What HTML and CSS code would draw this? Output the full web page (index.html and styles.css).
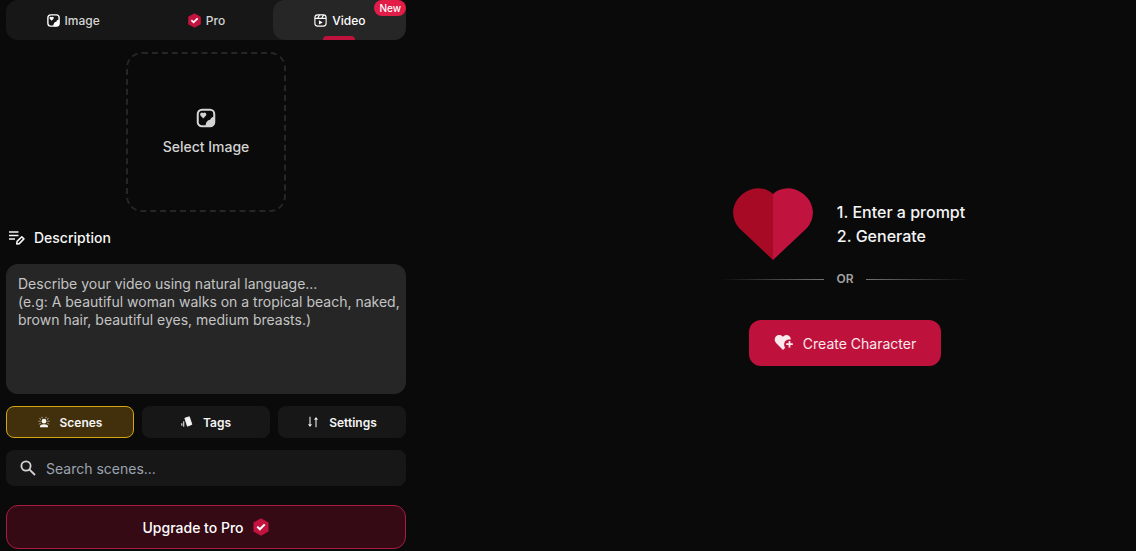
FILE: index.html
```html
<!DOCTYPE html>
<html lang="en">
<head>
<meta charset="utf-8">
<meta name="viewport" content="width=device-width, initial-scale=1">
<title>Video generator</title>
<link rel="stylesheet" href="styles.css">
</head>
<body>
<svg class="sprite" aria-hidden="true">
  <symbol id="picture" viewBox="0 0 24 24">
    <rect x="3" y="3" width="18" height="18" rx="4.5" fill="none" stroke="currentColor" stroke-width="2.2"/>
    <path d="M21 10.500c-2.500 0-4 1.500-4.500 3.500-2.500.2-4.800 2.500-5 7H17a4 4 0 0 0 4-4z" fill="currentColor"/>
    <path d="M9 12.500 6 9.200a1.800 1.800 0 0 1 3-2.300 1.800 1.800 0 0 1 3 2.300z" fill="currentColor"/>
  </symbol>
  <symbol id="verified" viewBox="0 0 24 24">
    <path d="M12 1.500 21 6.500v11l-9 5-9-5v-11z" fill="#c3143f" stroke="#c3143f" stroke-width="2" stroke-linejoin="round"/>
    <path d="m7 11.500 3.500 3.500 6.500-6.500" fill="none" stroke="#fff" stroke-width="2.800"/>
  </symbol>
</svg>
<div class="layout">
  <aside class="panel">
    <nav class="tabs">
      <button class="tab" type="button"><svg class="icon icon-light"><use href="#picture"/></svg>Image</button>
      <button class="tab" type="button"><svg class="icon"><use href="#verified"/></svg>Pro</button>
      <button class="tab tab-active" type="button">
        <svg class="icon" viewBox="0 0 24 24" fill="none" stroke="currentColor" stroke-width="1.800"><rect x="3" y="3" width="18" height="18" rx="4.500"/><path d="M3 8.500h18M7.500 8.500l3-5.500M14 8.500l3-5.500"/><path d="m9.500 11.500 6 3.500-6 3.500z" fill="currentColor" stroke="none"/></svg>Video
        <span class="badge">New</span>
      </button>
    </nav>

    <button class="upload" type="button"><svg class="icon-large"><use href="#picture"/></svg>Select Image</button>

    <label class="heading" for="description">
      <svg class="icon-heading" viewBox="0 0 18 16" fill="none" stroke="currentColor"><path d="M1 2h9.500M1 5.500h9.500M1 9h6" stroke-width="1.700"/><path d="m8.700 14 .4-2.600 4.700-4.600 2.100 2.100-4.600 4.700z" stroke-width="1.600" stroke-linejoin="round"/></svg>
      Description
    </label>
    <textarea class="description" id="description" placeholder="Describe your video using natural language...&#10;(e.g: A beautiful woman walks on a tropical beach, naked, brown hair, beautiful eyes, medium breasts.)"></textarea>

    <div class="options">
      <button class="option option-active" type="button">
        <svg class="icon-small" viewBox="0 0 14 14" fill="currentColor"><circle cx="7" cy="6" r="2.800"/><path d="M2.300 13v-.8c0-1.800 2-2.600 4.700-2.600s4.700.8 4.700 2.600v.8z"/><path d="M3 8.500 1 9.500M2.800 6.200.6 6M3.300 4 1.500 2.700M5 2.500 4.300.8M9 2.500l.7-1.700M10.700 4l1.800-1.300M11.200 6.200l2.200-.2M11 8.500l2 1" stroke="currentColor" stroke-dasharray="1.200 .5"/></svg>Scenes
      </button>
      <button class="option" type="button">
        <svg class="icon-small" viewBox="0 0 14 14" fill="currentColor"><path d="m4.500 2.500 5.200-1.600 3 8.900-5.200 2.100z" stroke="currentColor" stroke-linejoin="round"/><path d="M3.200 6v6.500M1 8.500v3" stroke="currentColor" stroke-width="1.200"/></svg>Tags
      </button>
      <button class="option" type="button">
        <svg class="icon-small" viewBox="0 0 14 14"><path d="M3.500 1v9M10.500 4v9" stroke="currentColor" stroke-width="1.200"/><path d="M1.200 9.500h4.600L3.500 12.700zM8.200 4.500h4.600L10.500 1.300z" fill="currentColor"/></svg>Settings
      </button>
    </div>

    <label class="search">
      <svg class="icon-search" viewBox="0 0 16 16" fill="none" stroke="currentColor" stroke-width="1.800"><circle cx="6" cy="6" r="4.600"/><path d="m9.300 9.300 5.700 5.700"/></svg>
      <input class="search-input" type="search" aria-label="Search scenes" placeholder="Search scenes...">
    </label>

    <button class="upgrade" type="button">Upgrade to Pro<svg class="icon-pro"><use href="#verified"/></svg></button>
  </aside>

  <main class="stage">
    <div class="intro">
      <svg class="heart" viewBox="0 0 80 72"><path d="M40 6C33-1 20-2 11 5-2 14-3 30 6 40l34 32z" fill="#a60a25"/><path d="M40 6C47-1 60-2 69 5c13 9 14 25 5 35L40 72z" fill="#c0143f"/></svg>
      <div class="steps"><div>1. Enter a prompt</div><div>2. Generate</div></div>
    </div>
    <div class="divider"><span class="line"></span>OR<span class="line line-end"></span></div>
    <button class="create" type="button">
      <svg class="icon-create" viewBox="0 0 20 18" fill="currentColor"><path d="M9 2.700C6.800.2 3.200.4 1.600 2.800.1 5 .6 7.500 2.300 9.200L9 16l2.200-2.200c-2.200-3-1-7.500 3-8.300h2.700C16.500.8 11.700-.5 9 2.700z"/><path d="M15.500 7v6.500M12.200 10.200h6.600" stroke="currentColor" stroke-width="1.800"/></svg>Create Character
    </button>
  </main>
</div>
</body>
</html>
```
FILE: styles.css
```css
* { box-sizing: border-box; }
body {
  margin: 0;
  background: #0a0a0a;
  color: #f5f5f5;
  font-family: "Inter", "Liberation Sans", sans-serif;
  font-size: 14px;
}
button, input, textarea { font: inherit; color: inherit; }
button {
  display: flex;
  align-items: center;
  justify-content: center;
  border: 0;
  padding: 0;
  cursor: pointer;
}
svg { flex: none; }
.sprite { display: none; }
.layout {
  display: grid;
  grid-template-columns: 412px 1fr;
  min-height: 100vh;
}
.panel {
  display: flex;
  flex-direction: column;
  padding: 0 6px 2px;
}
.tabs {
  display: grid;
  grid-template-columns: repeat(3, 1fr);
  border-radius: 12px;
  background: #171717;
}
.tab {
  position: relative;
  gap: 4px;
  height: 40px;
  border-radius: 12px;
  background: none;
  color: #d4d4d4;
  font-size: 12px;
  font-weight: 500;
}
.tab-active {
  background: #262626;
  color: #fff;
}
.tab-active::after {
  content: "";
  position: absolute;
  bottom: 0;
  left: 50%;
  width: 32px;
  height: 4px;
  margin-left: -16px;
  border-radius: 4px 4px 0 0;
  background: #be123c;
}
.badge {
  position: absolute;
  top: 0;
  right: 0;
  padding: 0 5px;
  border-radius: 8px;
  background: #e11d48;
  font-size: 10px;
  line-height: 16px;
}
.icon { width: 15px; height: 15px; }
.icon-light { color: #fff; }
.upload {
  flex-direction: column;
  align-self: center;
  gap: 8px;
  width: 160px;
  height: 160px;
  margin-top: 12px;
  border: 2px dashed #262626;
  border-radius: 16px;
  background: none;
  color: #d4d4d4;
  font-weight: 500;
  line-height: 20px;
}
.icon-large { width: 22px; height: 22px; }
.heading {
  display: flex;
  align-items: center;
  gap: 8px;
  margin: 16px 0;
  padding-left: 2px;
  font-weight: 500;
  line-height: 20px;
}
.icon-heading { width: 18px; height: 16px; }
.description {
  display: block;
  width: 100%;
  height: 130px;
  padding: 11px 4px 12px 12px;
  border: 0;
  border-radius: 12px;
  background: #262626;
  line-height: 18px;
  resize: none;
}
.description::placeholder { color: #c4c4c4; opacity: 1; }
.options {
  display: grid;
  grid-template-columns: repeat(3, 1fr);
  gap: 8px;
  margin-top: 12px;
}
.option {
  gap: 10px;
  height: 32px;
  border-radius: 8px;
  background: #171717;
  font-size: 12px;
  font-weight: 600;
}
.option-active {
  border: 1px solid #d4a514;
  background: #42300c;
}
.icon-small { width: 12px; height: 12px; }
.search {
  display: flex;
  align-items: center;
  gap: 10px;
  height: 36px;
  margin-top: 12px;
  padding: 0 14px;
  border-radius: 8px;
  background: #171717;
}
.icon-search { width: 16px; height: 16px; color: #d4d4d4; }
.search-input {
  flex: 1;
  min-width: 0;
  padding: 0;
  border: 0;
  outline: 0;
  background: none;
}
.search-input::placeholder { color: #9ca3af; opacity: 1; }
.upgrade {
  gap: 8px;
  height: 44px;
  margin-top: 19px;
  border: 1px solid #a91c44;
  border-radius: 12px;
  background: #360a15;
  color: #fff;
  font-weight: 500;
}
.icon-pro { width: 18px; height: 18px; }
.stage {
  display: flex;
  flex-direction: column;
  align-items: center;
  justify-content: center;
  padding: 3px 0 0 142px;
}
.intro {
  display: flex;
  align-items: center;
  gap: 24px;
  padding-left: 8px;
}
.heart { width: 80px; height: 72px; }
.steps { font-size: 16px; font-weight: 500; line-height: 24px; }
.divider {
  display: flex;
  align-items: center;
  gap: 12px;
  margin-top: 10px;
  color: #a3a3a3;
  font-size: 12px;
  font-weight: 600;
  line-height: 18px;
}
.line {
  width: 104px;
  height: 1px;
  background: linear-gradient(to right, transparent, #737373);
}
.line-end { background: linear-gradient(to left, transparent, #737373); }
.create {
  gap: 9px;
  height: 46px;
  margin-top: 32px;
  padding: 0 25px;
  border-radius: 12px;
  background: #be123c;
  color: #fbe9ed;
}
.icon-create { width: 20px; height: 18px; }
```
